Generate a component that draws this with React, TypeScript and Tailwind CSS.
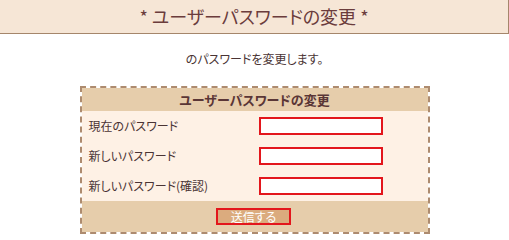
import React from "react";

const jp = "font-['Noto_Sans_CJK_JP','Noto_Sans',sans-serif] [font-feature-settings:'palt']";

function Row({ label }: { label: string }) {
  return (
    <div className="grid grid-cols-[177px_1fr] h-[30px] items-center">
      <div className="pl-[7px] text-[12px] text-[#4a3434] leading-none">{label}</div>
      <div className="flex items-center">
        <input type="password" className="h-[18px] w-[124px] border-2 border-[#e3161c] bg-white outline-none" />
      </div>
    </div>
  );
}

export default function App() {
  return (
    <div className={`w-[509px] h-[235px] bg-white ${jp}`}>
      <div className="h-[34px] bg-[#f6e6d6] border-b border-r border-[#a5866b] flex items-center justify-center text-[18px] text-[#6b3c3c] leading-none pb-[1px]">
        * ユーザーパスワードの変更 *
      </div>
      <div className="h-[52px] flex items-center justify-center text-[12px] text-[#4a3434] leading-none pb-[2px]">
        のパスワードを変更します。
      </div>
      <div className="mx-auto w-[350px] border-2 border-dashed border-[#ad8b6f]">
        <div className="h-[23px] bg-[#e6cdab] flex items-center justify-center text-[13px] font-bold text-[#5a3636] leading-none">
          ユーザーパスワードの変更
        </div>
        <div className="bg-[#fef1e5]">
          <Row label="現在のパスワード" />
          <Row label="新しいパスワード" />
          <Row label="新しいパスワード(確認)" />
        </div>
        <div className="h-[31px] bg-[#e6cdab] flex items-center justify-center pr-[2px]">
          <button className="h-[17px] w-[75px] border-2 border-[#e3161c] bg-[#dbab7e] text-white text-[12px] leading-none flex items-center justify-center">
            送信する
          </button>
        </div>
      </div>
    </div>
  );
}
